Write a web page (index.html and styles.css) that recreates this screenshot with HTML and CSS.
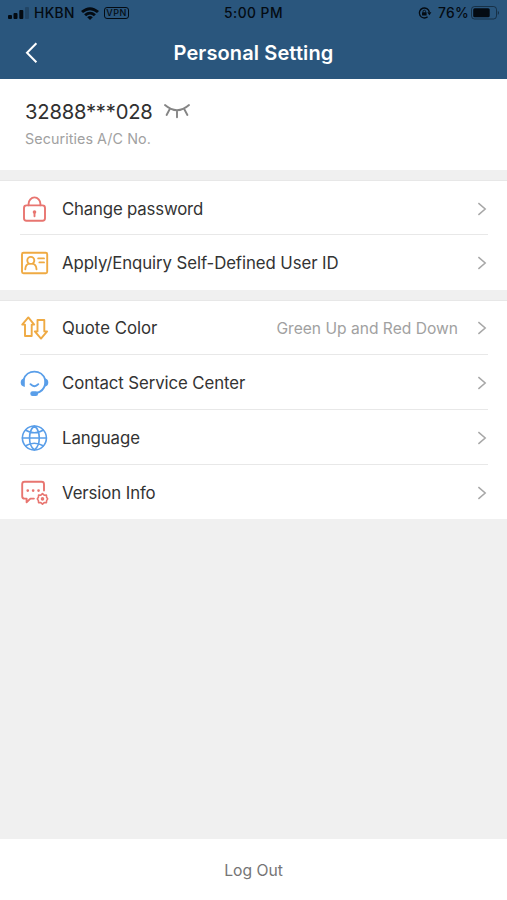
FILE: index.html
```html
<!DOCTYPE html>
<html lang="en">
<head>
<meta charset="utf-8">
<meta name="viewport" content="width=device-width, initial-scale=1">
<title>Personal Setting</title>
<link rel="stylesheet" href="styles.css">
</head>
<body>
<header class="header">
  <div class="status">
    <div class="status-left">
      <svg width="21" height="12" viewBox="0 0 21 12"><rect x="0" y="8" width="4" height="4" rx="1"/><rect x="5.5" y="6" width="4" height="6" rx="1"/><rect x="11.3" y="3" width="4" height="9" rx="1"/><rect x="17" y="0" width="4" height="12" rx="1" opacity=".22"/></svg>
      <span class="carrier">HKBN</span>
      <svg class="wifi" width="18" height="13" viewBox="0 0 18 13"><path d="M0 4Q9-3.6 18 4L16 6.1Q9 .2 2 6.1Z"/><path d="M3.1 7.2Q9 2.3 14.9 7.2L12.9 9.2Q9 6 5.1 9.2Z"/><path d="M6.2 10.2Q9 8 11.8 10.2L9 13Z"/></svg>
      <span class="vpn">VPN</span>
    </div>
    <span class="time">5:00 PM</span>
    <div class="status-right">
      <svg width="14" height="12" viewBox="0 0 14 12"><path d="M9.6 9.8A5 5 0 1 1 11.3 5.2" fill="none" stroke="#040b12" stroke-width="1.4"/><path d="M9.3 5.2H13.4L11.4 8.2Z"/><rect x="4" y="5.2" width="4.6" height="3.4" rx=".5"/><path d="M5 5.5V4.5a1.3 1.3 0 0 1 2.6 0V5.5" fill="none" stroke="#040b12" stroke-width=".9"/></svg>
      <span class="percent">76%</span>
      <svg class="battery" width="29" height="14" viewBox="0 0 29 14"><rect x=".5" y=".5" width="25" height="12.5" rx="3" fill="none" stroke="#040b12" opacity=".5"/><rect x="2.2" y="2.2" width="16.5" height="9" rx="1.5"/><path d="M26.8 4.7Q29.2 6.8 26.8 8.9Z" opacity=".55"/></svg>
    </div>
  </div>
  <div class="nav">
    <svg class="back" width="14" height="22" viewBox="0 0 14 22"><path d="M12.4 1.2L3 10.7L12.4 20.2"/></svg>
    <h1 class="title">Personal Setting</h1>
  </div>
</header>
<main class="main">
  <section class="account">
    <div class="number-line"><span class="number">32888***028</span>
      <svg class="eye" width="26" height="17" viewBox="0 0 26 17"><path d="M1 2Q13 12.4 25 2M5.8 6L2.6 12M13 7.5V14.3M20.2 6L23.4 12"/></svg>
    </div>
    <div class="caption">Securities A/C No.</div>
  </section>
  <section class="group">
    <div class="row">
      <svg class="icon red" viewBox="0 0 28 28"><rect x="4" y="10.4" width="21" height="15.4" rx="2.5"/><path d="M8.6 10.2V8.8a5.9 6.4 0 0 1 11.8 0v1.4M14.5 17.5v3.7"/><circle class="fill" cx="14.5" cy="17" r="1.8"/></svg>
      <span class="label tight">Change password</span><svg class="chevron" viewBox="0 0 10 14"><path d="M1.4 1.1L8.2 7L1.4 12.9"/></svg>
    </div>
    <div class="row">
      <svg class="icon amber" viewBox="0 0 28 28"><rect x="2" y="3.8" width="25.2" height="20.5" rx="1.5"/><circle cx="10.8" cy="11.4" r="3.5"/><path d="M5.3 20.2Q5.6 15.2 9.1 14.6M16.5 20.2Q16.2 15.2 12.5 14.6M18.2 9.4H24M19.4 13.4H24"/></svg>
      <span class="label">Apply/Enquiry Self-Defined User ID</span><svg class="chevron" viewBox="0 0 10 14"><path d="M1.4 1.1L8.2 7L1.4 12.9"/></svg>
    </div>
  </section>
  <section class="group settings">
    <div class="row">
      <svg class="icon amber" viewBox="0 0 28 28"><path d="M8.3 3.4L2.2 10.6H5V22H11.7V10.6H14.2ZM17.5 6H24.3V17.4H27.1L21 24.6L14.8 17.4H17.5Z"/></svg>
      <span class="label wide">Quote Color</span><span class="value">Green Up and Red Down</span><svg class="chevron" viewBox="0 0 10 14"><path d="M1.4 1.1L8.2 7L1.4 12.9"/></svg>
    </div>
    <div class="row">
      <svg class="icon blue" viewBox="0 0 28 28"><path d="M3.7 10.5A11.2 11.2 0 0 1 25.1 10.5M25.1 15.5A11.5 11.5 0 0 1 16.5 24M10.5 15.2Q14.4 19.4 18.3 15.2"/><path class="fill" d="M4.8 9.3V17.9Q.7 17.4.7 13.6T4.8 9.3ZM24.2 9.3V17.9Q28.3 17.4 28.3 13.6T24.2 9.3Z"/><rect class="fill" x="10.3" y="22.2" width="7.8" height="4.8" rx="2.2"/></svg>
      <span class="label">Contact Service Center</span><svg class="chevron" viewBox="0 0 10 14"><path d="M1.4 1.1L8.2 7L1.4 12.9"/></svg>
    </div>
    <div class="row">
      <svg class="icon blue thin" viewBox="0 0 28 28"><circle cx="14.4" cy="14" r="12"/><path d="M14.4 2C7.9 7 7.9 21 14.4 26M14.4 2C20.9 7 20.9 21 14.4 26M2.4 14H26.4M5.7 6.2Q14.4 11.2 23.1 6.2M5.7 21.8Q14.4 16.8 23.1 21.8"/></svg>
      <span class="label">Language</span><svg class="chevron" viewBox="0 0 10 14"><path d="M1.4 1.1L8.2 7L1.4 12.9"/></svg>
    </div>
    <div class="row">
      <svg class="icon red" viewBox="0 0 28 28"><path d="M24 11.5V5.2Q24 2.8 21.6 2.8H4.6Q2.2 2.8 2.2 5.2V17.2Q2.2 19.6 4.6 19.6H6.6V23.2L10.4 19.6H13.9"/><path class="dots" d="M7.7 11.6h.1M13.1 11.6h.1M18.5 11.6h.1"/><path class="gear" d="M22.5 14.6L24.2 16.2L26.4 16L26.6 18.2L27.7 19.9L26.6 21.6L26.4 23.8L24.2 23.6L22.5 25.2L20.8 23.6L18.6 23.8L18.4 21.6L17.3 19.9L18.4 18.2L18.6 16L20.8 16.2Z"/><circle class="gear" cx="22.5" cy="19.9" r="1"/></svg>
      <span class="label">Version Info</span><svg class="chevron" viewBox="0 0 10 14"><path d="M1.4 1.1L8.2 7L1.4 12.9"/></svg>
    </div>
  </section>
</main>
<footer class="footer"><span>Log Out</span></footer>
</body>
</html>
```

FILE: styles.css
```css
* { box-sizing: border-box; }
body {
  margin: 0;
  height: 900px;
  display: flex;
  flex-direction: column;
  overflow: hidden;
  background: #f0f0f0;
  color: #333;
  font-family: Inter, "Liberation Sans", sans-serif;
  white-space: nowrap;
}
svg { display: block; flex: none; overflow: visible; }
.header { height: 79px; flex: none; background: #2a567d; color: #040b12; }
.status {
  height: 26px;
  padding: 0 8px;
  display: grid;
  grid-template-columns: 1fr auto 1fr;
  align-items: center;
  font-size: 13.8px;
  font-weight: 500;
  fill: #040b12;
}
.status-left, .status-right { display: flex; align-items: center; }
.status-right { justify-content: flex-end; }
.carrier { margin-left: 5px; width: 42px; letter-spacing: .4px; }
.wifi { margin-left: 5px; }
.vpn {
  margin-left: 5px;
  width: 25px;
  height: 12px;
  border: 1px solid #040b12;
  border-radius: 3px;
  text-align: center;
  font-size: 9px;
  line-height: 10px;
  letter-spacing: .5px;
}
.time { letter-spacing: .5px; }
.percent { margin-left: 6px; width: 31px; letter-spacing: .3px; }
.battery { margin-left: 2px; margin-right: -1px; }
.nav {
  height: 53px;
  padding: 0 24px;
  display: grid;
  grid-template-columns: 20px 1fr 20px;
  align-items: center;
}
.back { fill: none; stroke: #fff; stroke-width: 2; }
.title { margin: 0; text-align: center; color: #fff; font-size: 20px; font-weight: 600; letter-spacing: .12px; }
.main { flex: 1; }
.account {
  height: 91px;
  padding: 19px 25px 0;
  background: #fff;
}
.number-line { display: flex; align-items: center; height: 26px; }
.number { width: 128px; padding-top: 1px; font-size: 20.2px; letter-spacing: -.2px; color: #303030; }
.eye { margin-left: 11px; fill: none; stroke: #858585; stroke-width: 1.9; stroke-linecap: round; }
.caption { margin-top: 6px; color: #a1a1a1; font-size: 14.3px; line-height: 18px; letter-spacing: .08px; }
.group {
  margin-top: 10px;
  padding-left: 20px;
  background: #fff;
  border-top: 1px solid #e7e7e7;
}
.row {
  position: relative;
  height: 55px;
  padding-right: 20px;
  display: flex;
  align-items: center;
}
.row:first-child { height: 54px; padding-top: 1px; }
.settings .row:first-child { padding-top: 0; }
.settings .row:last-child { height: 54px; padding-top: 2px; }
.row:not(:last-child)::after {
  content: "";
  position: absolute;
  left: 0;
  right: 19px;
  bottom: 0;
  height: 1px;
  background: #e8e8e8;
}
.icon { width: 28px; height: 28px; fill: none; stroke: currentColor; stroke-width: 1.9; stroke-linecap: round; stroke-linejoin: round; }
.icon .fill { fill: currentColor; stroke: none; }
.icon .dots { stroke-width: 2.6; }
.icon .gear { stroke-width: 1.6; }
.thin { stroke-width: 1.6; }
.red { color: #e87570; }
.amber { color: #efaa43; }
.blue { color: #599ee9; }
.label { margin-left: 14px; font-size: 16.8px; letter-spacing: -.09px; }
.tight { letter-spacing: -.18px; }
.wide { letter-spacing: 0; }
.value { margin-left: auto; color: #a1a1a1; font-size: 15.6px; }
.chevron { width: 10px; height: 14px; margin-left: auto; fill: none; stroke: #a7a7a7; stroke-width: 1.5; }
.value + .chevron { margin-left: 19px; }
.footer {
  height: 61px;
  flex: none;
  display: flex;
  align-items: center;
  justify-content: center;
  padding-top: 1px;
  background: #fff;
  color: #757575;
  font-size: 15.7px;
}
```
